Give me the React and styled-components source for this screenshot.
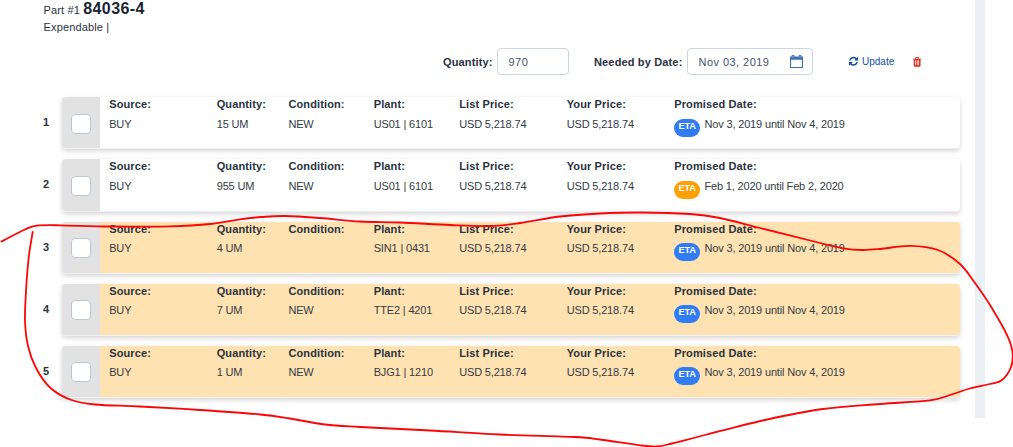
import React from "react";
import styled, { createGlobalStyle } from "styled-components";

const Global = createGlobalStyle`
  html, body { margin: 0; padding: 0; background: #fff; overflow: hidden; }
  * { box-sizing: border-box; }
  body { font-family: "Liberation Sans", Arial, sans-serif; font-size: 11px; color: #29323f; }
`;

const Page = styled.div`
  position: relative;
  display: flex;
  width: 1013px;
  height: 447px;
  overflow: hidden;
`;

const Panel = styled.main`
  width: 975px;
  height: 418px;
`;

const Gutter = styled.div`
  width: 10px;
  height: 418px;
  background: #ebf0f5;
`;

const Header = styled.header`
  height: 48px;
  padding-left: 43.5px;
`;

const PartLine = styled.div`
  height: 19px;
  line-height: 17px;
  white-space: nowrap;
  letter-spacing: 0.15px;
`;

const PartNumber = styled.strong`
  font-size: 16px;
  letter-spacing: 0.4px;
  color: #1b2433;
`;

const PartType = styled.div`
  line-height: 16px;
  letter-spacing: 0.15px;
`;

const Toolbar = styled.div`
  display: flex;
  align-items: center;
  height: 27px;
  padding-left: 443px;
  white-space: nowrap;
`;

const FieldLabel = styled.label`
  width: ${(p) => p.$width}px;
  font-weight: bold;
  letter-spacing: 0.15px;
`;

const Field = styled.div`
  display: flex;
  align-items: center;
  justify-content: space-between;
  width: ${(p) => p.$width}px;
  height: 27px;
  margin-right: ${(p) => p.$gap}px;
  padding: 0 9.5px 0 10.5px;
  border: 1px solid #cbd5e6;
  border-radius: 4px;
  color: #44506a;
  letter-spacing: 0.45px;
`;

const UpdateButton = styled.button`
  display: flex;
  align-items: center;
  gap: 4px;
  width: 64px;
  padding: 0;
  border: 0;
  background: none;
  color: #1150a8;
  font: 10px "Liberation Sans", Arial, sans-serif;
  letter-spacing: 0;
`;

const DeleteButton = styled.button`
  display: flex;
  padding: 1px 0 0;
  border: 0;
  background: none;
  color: #e02b20;
`;

const List = styled.section`
  display: flex;
  flex-direction: column;
  gap: 10px;
  padding: 22px 0 0 43px;
`;

const Row = styled.div`
  display: flex;
  height: 52.25px;
`;

const RowNumber = styled.div`
  width: 19px;
  padding-top: 19px;
  line-height: 13px;
  font-weight: bold;
`;

const Card = styled.div`
  display: flex;
  width: 898px;
  height: 52.25px;
  overflow: hidden;
  border-radius: 4px;
  border-bottom: 1px solid #edf1f4;
  background: ${(p) => (p.$highlight ? "#ffe2b1" : "#fff")};
  box-shadow: 0 2px 5px rgba(0, 0, 0, 0.17);
`;

const SelectCell = styled.div`
  width: 38px;
  padding: ${(p) => (p.$compact ? 16.2 : 17)}px 0 0 9px;
  background: #e2e2e2;
`;

const Checkbox = styled.div`
  width: 20px;
  height: 20px;
  border: 1px solid #b9c7dd;
  border-radius: 4px;
  background: #fff;
`;

const Cells = styled.div`
  display: grid;
  grid-template-columns: 107.5px 71.7px 85.3px 85.5px 107.5px 107.5px 1fr;
  flex: 1;
  padding-left: 9.2px;
  white-space: nowrap;
`;

const CellLabel = styled.div`
  height: 15px;
  line-height: 15px;
  font-weight: bold;
  letter-spacing: 0.13px;
`;

const CellValue = styled.div`
  display: flex;
  height: 24px;
  margin-top: ${(p) => (p.$compact ? 4 : 5)}px;
  line-height: 15px;
  color: #333b45;
  letter-spacing: -0.16px;
`;

const Eta = styled.span`
  width: 26px;
  height: 18px;
  margin: 2px 4.3px 0 0;
  border-radius: 9px;
  background: ${(p) => (p.$late ? "#ffa000" : "#307cf4")};
  color: #fff;
  font-size: 9.3px;
  font-weight: bold;
  line-height: 15px;
  text-align: center;
`;

const Markup = styled.svg`
  position: absolute;
  inset: 0;
  pointer-events: none;
`;

const rows = [
  { qty: "15 UM", condition: "NEW", plant: "US01 | 6101", date: "Nov 3, 2019 until Nov 4, 2019" },
  { qty: "955 UM", condition: "NEW", plant: "US01 | 6101", date: "Feb 1, 2020 until Feb 2, 2020", late: true },
  { qty: "4 UM", condition: "", plant: "SIN1 | 0431", date: "Nov 3, 2019 until Nov 4, 2019", highlight: true },
  { qty: "7 UM", condition: "NEW", plant: "TTE2 | 4201", date: "Nov 3, 2019 until Nov 4, 2019", highlight: true },
  { qty: "1 UM", condition: "NEW", plant: "BJG1 | 1210", date: "Nov 3, 2019 until Nov 4, 2019", highlight: true },
];

const stroke = [
  [1.5, 241.5], [25, 229.5], [37, 225.7], [60, 225.3], [110, 226.5], [170, 226.3], [210, 224], [240, 219.3],
  [262, 217], [285, 216], [320, 218], [360, 221.5], [400, 222.5], [450, 225], [490, 226], [520, 223],
  [560, 216.5], [600, 213.5], [640, 212.5], [690, 214], [720, 218], [760, 228], [820, 243], [843, 248.3],
  [862, 250], [880, 249], [910, 245.8], [938, 250], [960, 264], [975, 283], [990, 305], [1007, 335],
  [1012.5, 352], [1011, 367], [1002, 380], [990, 384], [970, 388.5], [950, 395], [930, 400.3], [880, 404],
  [823, 409], [765, 420], [705, 435], [672, 443.5], [657, 446.5], [640, 445.3], [600, 439.5], [575, 437],
  [500, 434.5], [430, 430.5], [360, 427], [325, 424.5], [290, 418.5], [260, 414.5], [200, 410], [140, 406.5],
  [95, 404.5], [70, 399.5], [50, 387.5], [36, 368], [28, 346], [25, 320], [26.5, 283], [29, 255], [32.7, 232],
];

function smooth(points) {
  let d = `M${points[0]}`;
  for (let i = 0; i < points.length - 1; i++) {
    const a = points[i - 1] || points[i];
    const b = points[i];
    const c = points[i + 1];
    const e = points[i + 2] || c;
    d += `C${b[0] + (c[0] - a[0]) / 6},${b[1] + (c[1] - a[1]) / 6} ${c[0] - (e[0] - b[0]) / 6},${c[1] - (e[1] - b[1]) / 6} ${c}`;
  }
  return d;
}

const RefreshIcon = () => (
  <svg width="9" height="10.5" viewBox="0 0 1536 1792" fill="currentColor">
    <path d="M1511 1056q0 5-1 7-64 268-268 434.5t-478 166.5q-146 0-282.5-55t-243.5-157l-129 129q-19 19-45 19t-45-19-19-45v-448q0-26 19-45t45-19h448q26 0 45 19t19 45-19 45l-137 137q71 66 161 102t187 36q134 0 250-65t186-179q11-17 53-117 8-23 30-23h192q13 0 22.5 9.5t9.5 22.5zm25-800v448q0 26-19 45t-45 19h-448q-26 0-45-19t-19-45 19-45l138-138q-148-137-349-137-134 0-250 65t-186 179q-11 17-53 117-8 23-30 23h-199q-13 0-22.5-9.5t-9.5-22.5v-7q65-268 270-434.5t480-166.5q146 0 284 55.5t245 156.5l130-129q19-19 45-19t45 19 19 45z" />
  </svg>
);

const TrashIcon = () => (
  <svg width="8.3" height="9.8" viewBox="192 128 1408 1536" preserveAspectRatio="none" fill="currentColor">
    <path d="M704 1376v-704q0-14-9-23t-23-9h-64q-14 0-23 9t-9 23v704q0 14 9 23t23 9h64q14 0 23-9t9-23zm256 0v-704q0-14-9-23t-23-9h-64q-14 0-23 9t-9 23v704q0 14 9 23t23 9h64q14 0 23-9t9-23zm256 0v-704q0-14-9-23t-23-9h-64q-14 0-23 9t-9 23v704q0 14 9 23t23 9h64q14 0 23-9t9-23zm-544-992h448l-48-117q-7-9-17-11h-317q-10 2-17 11zm928 32v64q0 14-9 23t-23 9h-96v948q0 83-47 143.5t-113 60.5h-832q-66 0-113-58.5t-47-141.5v-952h-96q-14 0-23-9t-9-23v-64q0-14 9-23t23-9h309l70-167q15-37 54-63t79-26h320q40 0 79 26t54 63l70 167h309q14 0 23 9t9 23z" />
  </svg>
);

const CalendarIcon = () => (
  <svg width="13" height="13" viewBox="0 0 13 13">
    <path fill="#3c6fb4" fillRule="evenodd" d="M0 1.5h1.7V0h2.6v1.5h4.4V0h2.6v1.5H13V13H0zM1.1 4.7v7.2h10.8V4.7z" />
    <path stroke="#b9cde8" strokeWidth=".7" d="M3 .7v2M10 .7v2" />
  </svg>
);

export default function App() {
  return (
    <Page>
      <Global />
      <Panel>
        <Header>
          <PartLine>Part #1 <PartNumber>84036-4</PartNumber></PartLine>
          <PartType>Expendable |</PartType>
        </Header>
        <Toolbar>
          <FieldLabel $width={54}>Quantity:</FieldLabel>
          <Field $width={72} $gap={25}>970</Field>
          <FieldLabel $width={93}>Needed by Date:</FieldLabel>
          <Field $width={126} $gap={36}>Nov 03, 2019<CalendarIcon /></Field>
          <UpdateButton><RefreshIcon />Update</UpdateButton>
          <DeleteButton aria-label="Delete"><TrashIcon /></DeleteButton>
        </Toolbar>
        <List>
          {rows.map((row, i) => (
            <Row key={i}>
              <RowNumber>{i + 1}</RowNumber>
              <Card $highlight={row.highlight}>
                <SelectCell $compact={row.highlight}><Checkbox /></SelectCell>
                <Cells>
                  {[
                    ["Source:", "BUY"],
                    ["Quantity:", row.qty],
                    ["Condition:", row.condition],
                    ["Plant:", row.plant],
                    ["List Price:", "USD 5,218.74"],
                    ["Your Price:", "USD 5,218.74"],
                  ].map(([label, value]) => (
                    <div key={label}>
                      <CellLabel>{label}</CellLabel>
                      <CellValue $compact={row.highlight}>{value}</CellValue>
                    </div>
                  ))}
                  <div>
                    <CellLabel>Promised Date:</CellLabel>
                    <CellValue $compact={row.highlight}><Eta $late={row.late}>ETA</Eta>{row.date}</CellValue>
                  </div>
                </Cells>
              </Card>
            </Row>
          ))}
        </List>
      </Panel>
      <Gutter />
      <Markup width="1013" height="447" viewBox="0 0 1013 447">
        <path d={smooth(stroke)} fill="none" stroke="#fb0505" strokeWidth="1.8" strokeLinecap="round" />
      </Markup>
    </Page>
  );
}
